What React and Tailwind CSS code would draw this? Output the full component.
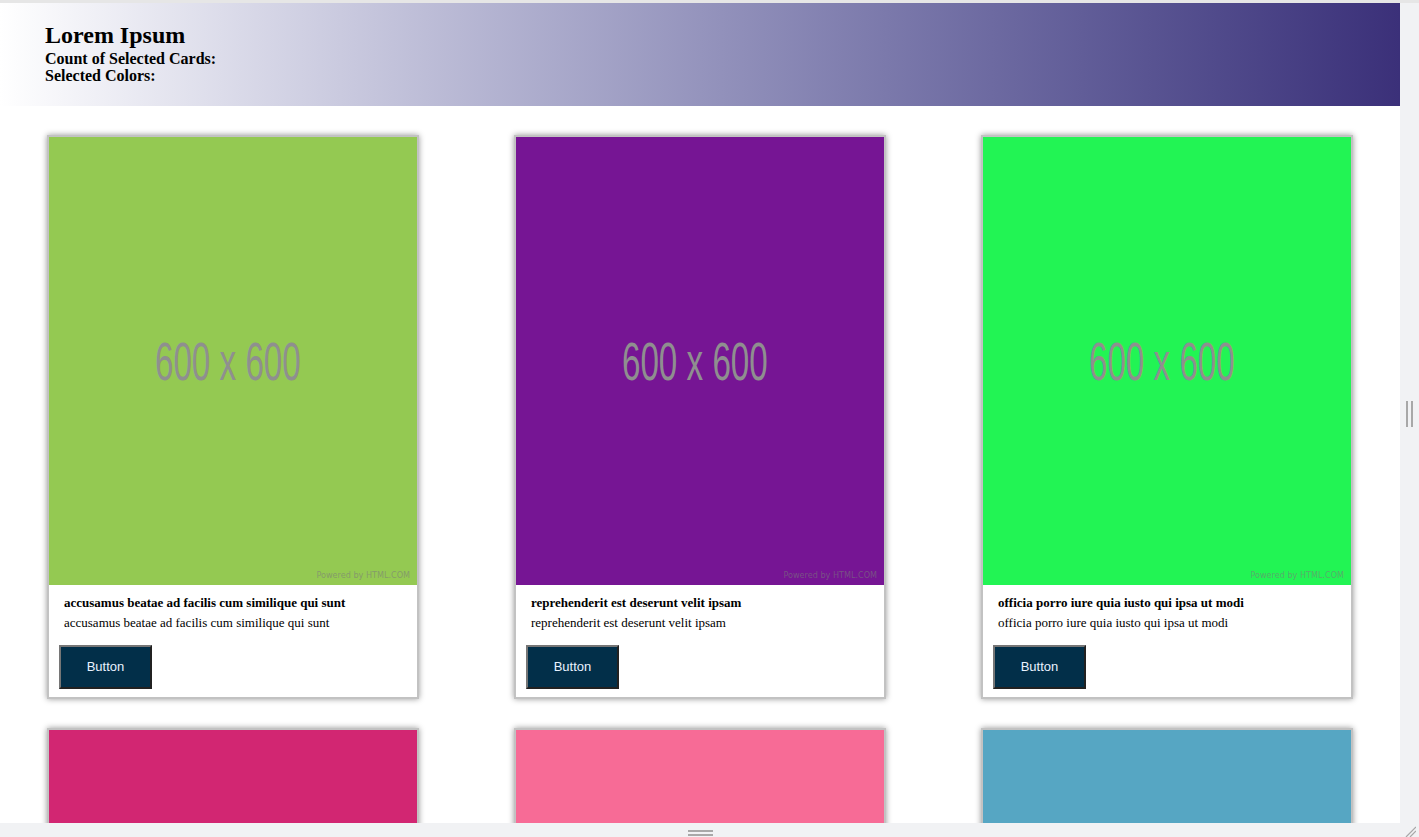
import React from 'react';

const cards = [
  { id: 1, color: '#94c952', title: 'accusamus beatae ad facilis cum similique qui sunt' },
  { id: 2, color: '#761594', title: 'reprehenderit est deserunt velit ipsam' },
  { id: 3, color: '#22f454', title: 'officia porro iure quia iusto qui ipsa ut modi' },
  { id: 4, color: '#d22672', title: 'culpa odio esse rerum omnis laboriosam voluptate repudiandae' },
  { id: 5, color: '#f76b96', title: 'natus nisi omnis corporis facere molestiae rerum in' },
  { id: 6, color: '#56a6c3', title: 'accusamus ea aliquid et amet sequi nemo' },
];

const Placeholder = ({ color }) => (
  <div className="relative h-[448px] flex items-center justify-center overflow-hidden" style={{ backgroundColor: color }}>
    <span className="font-['Liberation_Sans',Arial,sans-serif] text-[40px] text-[#8f8f8f] scale-x-[0.83] scale-y-[1.33] leading-none -mt-[1px] -ml-[10px]">
      600 x 600
    </span>
    <span className="absolute right-[7px] bottom-[3px] font-['DejaVu_Sans',sans-serif] text-[9px] text-[#7a7a7a]/60 scale-x-[0.9] origin-right">
      Powered by HTML.COM
    </span>
  </div>
);

const Card = ({ card }) => (
  <div className="w-[372px] border-2 border-[#c2c2c2] bg-white shadow-[0_0_6px_rgba(0,0,0,0.4)]">
    <Placeholder color={card.color} />
    <div className="pt-[8px] pb-[8px] font-['Liberation_Serif','Times_New_Roman',serif] text-black">
      <div className="px-[15px] text-[13px] leading-[20px] font-bold">{card.title}</div>
      <div className="px-[15px] text-[13px] leading-[20px]">{card.title}</div>
      <button className="ml-[10px] mt-[12px] w-[93px] h-[44px] bg-[#022f49] border-2 border-[#767676] [border-style:outset] text-[#e9f2ff] font-['Liberation_Sans',Arial,sans-serif] text-[13px]">
        Button
      </button>
    </div>
  </div>
);

export default function App() {
  return (
    <div className="w-[1419px] h-[837px] flex flex-col bg-[#f1f2f4] overflow-hidden">
      <div className="h-[3px] bg-[#e6e6e6] shrink-0" />
      <div className="flex flex-1 min-h-0">
        <div className="w-[1400px] bg-white overflow-hidden">
          <header className="h-[103px] pt-[18px] pl-[45px] bg-gradient-to-r from-white to-[#3b3079] font-['Liberation_Serif','Times_New_Roman',serif] text-black">
            <h1 className="text-[24px] leading-[29px] font-bold">Lorem Ipsum</h1>
            <div className="text-[16px] leading-[17px] font-bold">Count of Selected Cards:</div>
            <div className="text-[16px] leading-[17px] font-bold">Selected Colors:</div>
          </header>
          <main className="pt-[29px] pl-[47px] grid grid-cols-[repeat(3,372px)] gap-x-[95px] gap-y-[29px]">
            {cards.map((c) => (
              <Card key={c.id} card={c} />
            ))}
          </main>
        </div>
        <div className="w-[19px] flex items-center justify-center">
          <div className="flex gap-[3px] mt-[1px]">
            <div className="w-[2px] h-[26px] bg-[#a8a8a8]" />
            <div className="w-[2px] h-[26px] bg-[#a8a8a8]" />
          </div>
        </div>
      </div>
      <div className="h-[14px] shrink-0 relative flex justify-center">
        <div className="flex flex-col gap-[2px] pt-[7px] -ml-[18px]">
          <div className="w-[25px] h-[2px] bg-[#a8a8a8]" />
          <div className="w-[25px] h-[2px] bg-[#a8a8a8]" />
        </div>
        <svg className="absolute right-[3px] bottom-0" width="12" height="12" viewBox="0 0 12 12">
          <line x1="12" y1="2" x2="2" y2="12" stroke="#a8a8a8" strokeWidth="1.2" />
          <line x1="12" y1="6" x2="6" y2="12" stroke="#a8a8a8" strokeWidth="1.2" />
        </svg>
      </div>
    </div>
  );
}
